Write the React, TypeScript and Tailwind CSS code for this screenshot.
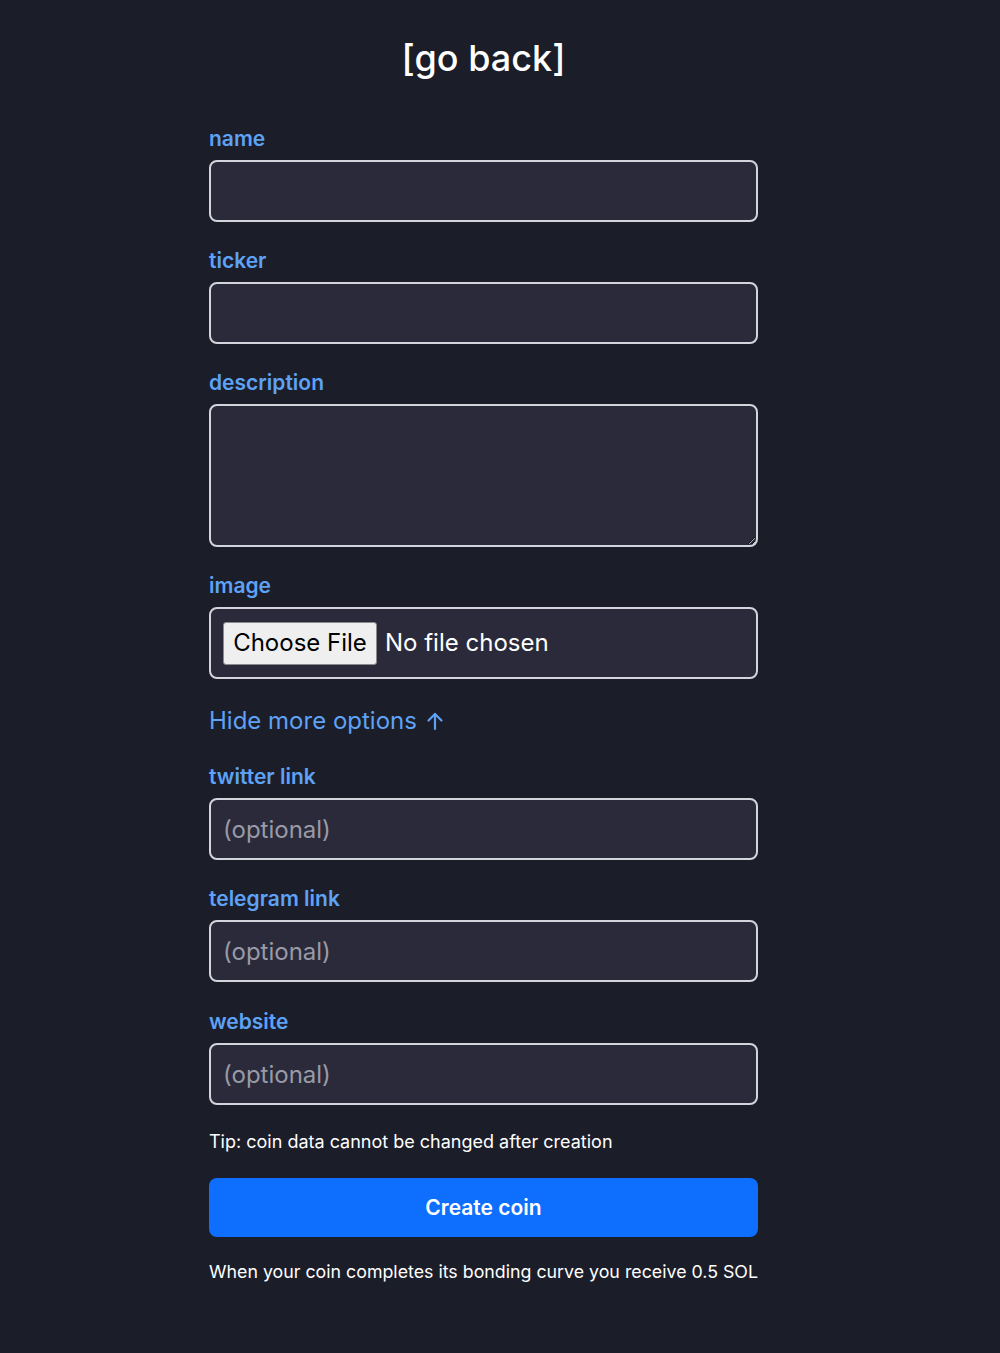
import React from "react";

const font = { fontFamily: "Inter, 'Noto Sans', sans-serif" };

function Label({ children }: { children: React.ReactNode }) {
  return (
    <div className="h-[28px] leading-[28px] mb-[7px] text-[21px] font-semibold text-[#5ea2f6]">
      {children}
    </div>
  );
}

function TextInput({ placeholder }: { placeholder?: string }) {
  return (
    <input
      type="text"
      placeholder={placeholder}
      className="block w-full h-[62px] rounded-[8px] border-2 border-[#d4d4dc] bg-[#2a2a3b] px-[12px] text-[24px] text-white placeholder:text-[#9a9aa6] outline-none"
    />
  );
}

export default function App() {
  return (
    <div className="min-h-[1353px] w-full bg-[#1b1d29] text-white" style={font}>
      <div className="ml-[209px] w-[549px] pt-[36px]">
        <div className="text-center text-[36px] font-medium leading-[44px] text-white">[go back]</div>

        <div className="mt-[45px]">
          <Label>name</Label>
          <TextInput />
        </div>

        <div className="mt-[25px]">
          <Label>ticker</Label>
          <TextInput />
        </div>

        <div className="mt-[25px]">
          <Label>description</Label>
          <textarea className="block w-full h-[143px] rounded-[8px] border-2 border-[#d4d4dc] bg-[#2a2a3b] px-[12px] py-[8px] text-[24px] text-white outline-none" />
        </div>

        <div className="mt-[25px]">
          <Label>image</Label>
          <div className="flex h-[72px] w-full items-center rounded-[8px] border-2 border-[#d4d4dc] bg-[#2a2a3b] pl-[12px]">
            <span className="flex h-[43px] w-[154px] items-center justify-center rounded-[3px] border border-[#8a8a8a] bg-[#efefef] text-[24px] text-black">
              Choose File
            </span>
            <span className="ml-[8px] text-[24px] text-white">No file chosen</span>
          </div>
        </div>

        <div className="mt-[27px] flex h-[30px] items-center text-[24px] leading-[30px] text-[#5ea2f6]">
          <span>Hide more options</span>
          <svg className="ml-[9px]" width="18" height="20" viewBox="0 0 18 20" fill="none" stroke="#5ea2f6" strokeWidth="2.2" strokeLinecap="round" strokeLinejoin="round">
            <path d="M9 18V3" />
            <path d="M2.5 9.5L9 3l6.5 6.5" />
          </svg>
        </div>

        <div className="mt-[27px]">
          <Label>twitter link</Label>
          <TextInput placeholder="(optional)" />
        </div>

        <div className="mt-[25px]">
          <Label>telegram link</Label>
          <TextInput placeholder="(optional)" />
        </div>

        <div className="mt-[26px]">
          <Label>website</Label>
          <TextInput placeholder="(optional)" />
        </div>

        <div className="mt-[25px] h-[24px] text-[18px] leading-[24px] text-white">
          Tip: coin data cannot be changed after creation
        </div>

        <button className="mt-[24px] flex h-[59px] w-full items-center justify-center rounded-[8px] bg-[#0e6ffe] text-[21px] font-semibold text-white">
          Create coin
        </button>

        <div className="mt-[23px] h-[24px] whitespace-nowrap text-[17.8px] leading-[24px] text-white">
          When your coin completes its bonding curve you receive 0.5 SOL
        </div>
      </div>
    </div>
  );
}
